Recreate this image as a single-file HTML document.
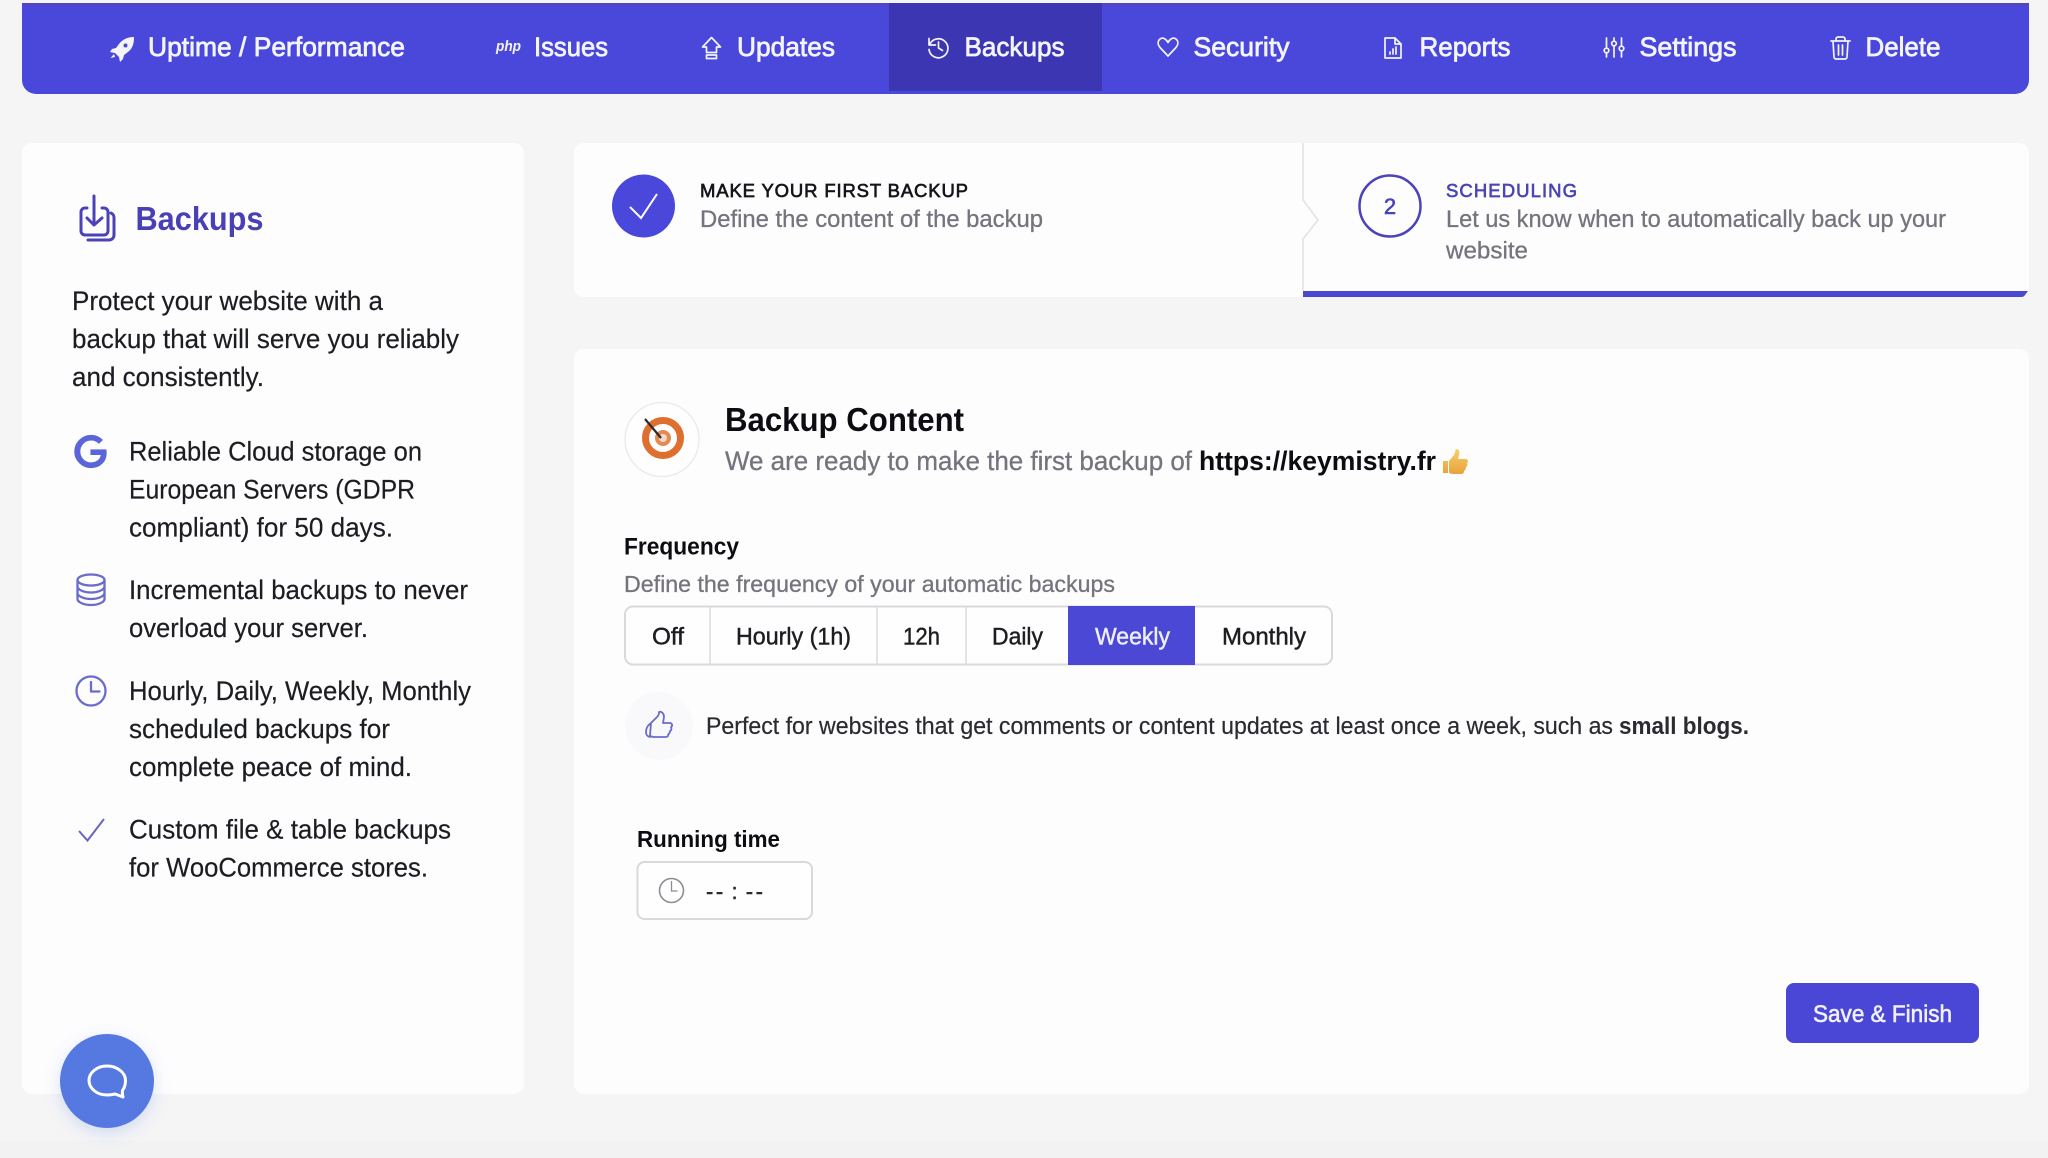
<!DOCTYPE html>
<html lang="en">
<head>
<meta charset="utf-8">
<title>Backups</title>
<style>
html,body{margin:0;padding:0;background:#f5f5f6;width:2048px;height:1158px;overflow:hidden}
svg{display:block;filter:blur(.35px)}
text{font-family:"Liberation Sans",sans-serif;white-space:pre}
.nav{font-size:27px;fill:#f4f4fd;stroke:#f4f4fd;stroke-width:.75}
.body{font-size:26.5px;fill:#1c1d22;stroke:#1c1d22;stroke-width:.2}
.gray{fill:#74747e;stroke:#74747e;stroke-width:.3}
.tab{font-size:24.5px;fill:#1d1d22;stroke:#1d1d22;stroke-width:.45}
.ico{fill:none;stroke:#f4f4fd;stroke-width:1.7;stroke-linecap:round;stroke-linejoin:round}
.pur{fill:none;stroke:#6a6cc9;stroke-width:2.3;stroke-linecap:round;stroke-linejoin:round}
</style>
</head>
<body>
<svg xmlns="http://www.w3.org/2000/svg" width="2048" height="1158" viewBox="0 0 2048 1158">
<defs>
<filter id="sh" x="-30%" y="-30%" width="160%" height="170%"><feDropShadow dx="0" dy="5" stdDeviation="8" flood-color="#5579e0" flood-opacity=".22"/></filter>
<linearGradient id="em" x1="0" y1="0" x2="0" y2="1"><stop offset="0" stop-color="#f7cf6a"/><stop offset="1" stop-color="#e9a23c"/></linearGradient>
</defs>
<rect width="2048" height="1158" fill="#f5f5f6"/>
<rect y="1141" width="2048" height="17" fill="#f2f2f3"/>

<!-- Nav -->
<path d="M22 3H2029V80a14 14 0 0 1-14 14H36a14 14 0 0 1-14-14z" fill="#4a48da"/>
<rect x="22" y="3" width="2007" height="3" fill="#5445c0"/>
<rect x="889" y="3" width="213" height="88" fill="#3d36b3"/>

<text class="nav" x="148" y="56" textLength="257" lengthAdjust="spacingAndGlyphs">Uptime / Performance</text>
<text class="nav" x="534" y="56" textLength="74" lengthAdjust="spacingAndGlyphs">Issues</text>
<text class="nav" x="737" y="56" textLength="98" lengthAdjust="spacingAndGlyphs">Updates</text>
<text class="nav" x="964.500" y="56" textLength="100" lengthAdjust="spacingAndGlyphs">Backups</text>
<text class="nav" x="1193.500" y="56" textLength="96" lengthAdjust="spacingAndGlyphs">Security</text>
<text class="nav" x="1419.500" y="56" textLength="91" lengthAdjust="spacingAndGlyphs">Reports</text>
<text class="nav" x="1639.500" y="56" textLength="97" lengthAdjust="spacingAndGlyphs">Settings</text>
<text class="nav" x="1865.500" y="56" textLength="75" lengthAdjust="spacingAndGlyphs">Delete</text>

<!-- nav icons -->
<path d="M134 37c-6 0-11 2-15 7l-3 4-4 1-2 3 5 1 4 4 1 5 3-3 1-4 4-3c5-4 6-9 6-15z" fill="#f4f4fd"/>
<circle cx="125.500" cy="45.500" r="2" fill="#4a48da"/>
<path d="M114 54l-3.500 4 4.500-1z" fill="#f4f4fd"/>
<text x="496" y="51" font-size="14.500" font-weight="700" font-style="italic" fill="#f4f4fd" textLength="25" lengthAdjust="spacingAndGlyphs">php</text>
<path class="ico" d="M711.500 37.500L720.500 47h-4v5.500h-10V47h-4z"/>
<rect class="ico" x="706.500" y="55" width="10" height="3.500"/>
<path class="ico" d="M929 38.500v6.500h6.500M929.500 45A9.500 9.500 0 1 1 929 49.500M938.500 42v6l4 2.500"/>
<path class="ico" d="M1168 56l-8-8.500c-5-6 1-11.500 5-8.500 1.500 1 2.300 2 3 3.500 .7-1.500 1.500-2.500 3-3.500 4-3 10 2.500 5 8.500z"/>
<path class="ico" d="M1385 38h10l6 6v14h-16zM1395 38v6h6M1390 54v-2M1393 54v-5M1396 54v-7"/>
<path class="ico" d="M1606.500 38v10M1606.500 53v4M1614 38v3M1614 46v11M1621.500 38v8M1621.500 51v6"/>
<circle class="ico" cx="1606.500" cy="50.500" r="2.300"/><circle class="ico" cx="1614" cy="43.500" r="2.300"/><circle class="ico" cx="1621.500" cy="48.500" r="2.300"/>
<path class="ico" d="M1831 41h19M1836 41v-2a2 2 0 0 1 2-2h5a2 2 0 0 1 2 2v2M1833 41l1 16a2 2 0 0 0 2 2h9a2 2 0 0 0 2-2l1-16M1838.500 45v10M1842.500 45v10"/>

<!-- Left card -->
<rect x="22" y="143" width="502" height="951" rx="10" fill="#fdfdfe"/>
<g fill="none" stroke="#4b42b8" stroke-width="3" stroke-linecap="round" stroke-linejoin="round">
<path d="M87 208h-2a4 4 0 0 0-4 4v19a4 4 0 0 0 4 4h19a4 4 0 0 0 4-4v-19a4 4 0 0 0-4-4h-2"/>
<path d="M88 240h21a5 5 0 0 0 5-5v-17a5 5 0 0 0-3-5"/>
<path d="M94 196v29M87 218l7 7 8-7"/>
</g>
<text x="135.500" y="230" font-size="33" font-weight="700" fill="#4840b4" textLength="128" lengthAdjust="spacingAndGlyphs">Backups</text>

<text class="body" x="72" y="310" textLength="311" lengthAdjust="spacingAndGlyphs">Protect your website with a</text>
<text class="body" x="72" y="348" textLength="387" lengthAdjust="spacingAndGlyphs">backup that will serve you reliably</text>
<text class="body" x="72" y="386" textLength="192" lengthAdjust="spacingAndGlyphs">and consistently.</text>

<path transform="translate(74.500 435.500) scale(1.33)" fill="#5b65d9" stroke="#5b65d9" stroke-width="1" d="M12.480 10.920v3.280h7.840c-.24 1.840-.853 3.187-1.787 4.133-1.147 1.147-2.933 2.400-6.053 2.400-4.827 0-8.600-3.893-8.600-8.720s3.773-8.720 8.600-8.720c2.600 0 4.507 1.027 5.907 2.347l2.307-2.307C18.747 1.440 16.133 0 12.480 0 5.867 0 .307 5.387.307 12s5.560 12 12.173 12c3.573 0 6.267-1.173 8.373-3.360 2.160-2.160 2.840-5.213 2.840-7.667 0-.76-.053-1.467-.173-2.053H12.480z"/>
<text class="body" x="129" y="460.500" textLength="293" lengthAdjust="spacingAndGlyphs">Reliable Cloud storage on</text>
<text class="body" x="129" y="498.500" textLength="286" lengthAdjust="spacingAndGlyphs">European Servers (GDPR</text>
<text class="body" x="129" y="536.500" textLength="264" lengthAdjust="spacingAndGlyphs">compliant) for 50 days.</text>

<g class="pur">
<ellipse cx="91" cy="580" rx="13.500" ry="5.500"/>
<path d="M77.500 580v19c0 3 6 6 13.500 6s13.500-3 13.500-6v-19M77.500 586.500c0 3 6 6 13.500 6s13.500-3 13.500-6M77.500 593c0 3 6 6 13.500 6s13.500-3 13.500-6"/>
</g>
<text class="body" x="129" y="599" textLength="339" lengthAdjust="spacingAndGlyphs">Incremental backups to never</text>
<text class="body" x="129" y="637" textLength="239" lengthAdjust="spacingAndGlyphs">overload your server.</text>

<circle class="pur" cx="91" cy="691" r="14.500"/>
<path class="pur" d="M91 682v9.500h8.500"/>
<text class="body" x="129" y="700" textLength="342" lengthAdjust="spacingAndGlyphs">Hourly, Daily, Weekly, Monthly</text>
<text class="body" x="129" y="738" textLength="261" lengthAdjust="spacingAndGlyphs">scheduled backups for</text>
<text class="body" x="129" y="776" textLength="283" lengthAdjust="spacingAndGlyphs">complete peace of mind.</text>

<path d="M79 831l8.500 9.500L104 819" fill="none" stroke="#6a66c0" stroke-width="2"/>
<text class="body" x="129" y="838.500" textLength="322" lengthAdjust="spacingAndGlyphs">Custom file &amp; table backups</text>
<text class="body" x="129" y="876.500" textLength="299" lengthAdjust="spacingAndGlyphs">for WooCommerce stores.</text>

<!-- Stepper -->
<rect x="574" y="143" width="1455" height="154" rx="10" fill="#fdfdfe"/>
<path d="M1303 143v57l15 20-15 19v52" fill="none" stroke="#e2e2e6" stroke-width="1.500"/>
<path d="M1303 291H2028l-3 4a4 4 0 0 1-3 2H1303z" fill="#4a48d0"/>
<circle cx="643.500" cy="206" r="31.500" fill="#4a48da"/>
<path d="M630 207l11 11 16-24" fill="none" stroke="#fff" stroke-width="2"/>
<text x="700" y="197" font-size="18.500" fill="#14141a" stroke="#14141a" stroke-width=".65" textLength="268" lengthAdjust="spacing">MAKE YOUR FIRST BACKUP</text>
<text class="gray" x="700" y="227" font-size="24.500" textLength="343" lengthAdjust="spacingAndGlyphs">Define the content of the backup</text>
<circle cx="1390" cy="206" r="30.500" fill="none" stroke="#4a43bb" stroke-width="2.500"/>
<text x="1390" y="214" font-size="22" text-anchor="middle" fill="#4a43bb" stroke="#4a43bb" stroke-width=".6">2</text>
<text x="1446" y="197" font-size="18.500" fill="#4a45b5" stroke="#4a45b5" stroke-width=".65" textLength="131" lengthAdjust="spacing">SCHEDULING</text>
<text class="gray" x="1446" y="227" font-size="24.500" textLength="500" lengthAdjust="spacingAndGlyphs">Let us know when to automatically back up your</text>
<text class="gray" x="1446" y="258.500" font-size="24.500" textLength="82" lengthAdjust="spacingAndGlyphs">website</text>

<!-- Main card -->
<rect x="574" y="349" width="1455" height="745" rx="10" fill="#fdfdfe"/>
<circle cx="662" cy="439.500" r="37" fill="#fefefe" stroke="#ececee" stroke-width="1.500"/>
<circle cx="663" cy="438" r="17.500" fill="#fff" stroke="#df6f2e" stroke-width="7"/>
<circle cx="663" cy="438" r="6" fill="#f4d9c6" stroke="#e58a52" stroke-width="4"/>
<path d="M645 419l16 19" stroke="#2a2a30" stroke-width="2.200"/>
<text x="725" y="431" font-size="33" font-weight="700" fill="#0c0c12" textLength="239" lengthAdjust="spacingAndGlyphs">Backup Content</text>
<text class="gray" x="725" y="470" font-size="26.500" textLength="467" lengthAdjust="spacingAndGlyphs">We are ready to make the first backup of</text>
<text x="1199" y="470" font-size="26.500" font-weight="700" fill="#0c0c12" textLength="237" lengthAdjust="spacingAndGlyphs">https://keymistry.fr</text>
<path d="M1443 461h5v12h-5zM1449 461l5-6c1-2 1-4 2-6 3 0 4 3 3 6l-1 4h8c2 0 3 3 1 4 1 2 0 4-1 4 0 2-1 3-2 4 0 2-1 3-3 3h-8c-2 0-3-1-4-1z" fill="url(#em)"/>

<text x="624" y="554.500" font-size="24" font-weight="700" fill="#0c0c12" textLength="115" lengthAdjust="spacingAndGlyphs">Frequency</text>
<text class="gray" x="624" y="592" font-size="23.500" textLength="491" lengthAdjust="spacingAndGlyphs">Define the frequency of your automatic backups</text>

<rect x="625" y="606.500" width="707" height="58" rx="8" fill="#fefefe" stroke="#d9d9dd" stroke-width="2"/>
<path d="M710 606v59M877 606v59M966 606v59" stroke="#dcdce0" stroke-width="1.500"/>
<rect x="1068" y="606" width="127" height="59" fill="#4a48d4"/>
<text class="tab" x="652" y="644.500" textLength="32" lengthAdjust="spacingAndGlyphs">Off</text>
<text class="tab" x="736" y="644.500" textLength="115" lengthAdjust="spacingAndGlyphs">Hourly (1h)</text>
<text class="tab" x="903" y="644.500" textLength="37" lengthAdjust="spacingAndGlyphs">12h</text>
<text class="tab" x="992" y="644.500" textLength="51" lengthAdjust="spacingAndGlyphs">Daily</text>
<text class="tab" x="1095" y="644.500" textLength="75" lengthAdjust="spacingAndGlyphs" style="fill:#eeeefc;stroke:#eeeefc">Weekly</text>
<text class="tab" x="1222" y="644.500" textLength="84" lengthAdjust="spacingAndGlyphs">Monthly</text>

<circle cx="659" cy="726" r="34" fill="#f9f9fb"/>
<path d="M651 723l6-6c2-2 2-3 2-5 3-1 5 2 5 5l-1 6h7c2 0 3 3 1 4 1 2 0 4-1 4 0 2-1 3-2 4 0 2-1 2-3 2h-11c-2 0-3-1-4-1zM651 723c-3 2-5 5-5 9 0 3 2 5 5 5" fill="none" stroke="#6a6cc9" stroke-width="1.800" stroke-linejoin="round"/>
<text x="706" y="734" font-size="24" fill="#2a2a31" stroke="#2a2a31" stroke-width=".2" textLength="907" lengthAdjust="spacingAndGlyphs">Perfect for websites that get comments or content updates at least once a week, such as</text>
<text x="1619" y="734" font-size="24" font-weight="700" fill="#2a2a31" textLength="130" lengthAdjust="spacingAndGlyphs">small blogs.</text>

<text x="637" y="847" font-size="23.500" font-weight="700" fill="#0c0c12" textLength="143" lengthAdjust="spacingAndGlyphs">Running time</text>
<rect x="637.500" y="862" width="174.500" height="57" rx="7" fill="#fefefe" stroke="#d9d9dd" stroke-width="2"/>
<circle cx="671.500" cy="890.500" r="12" fill="none" stroke="#8d8d93" stroke-width="1.600"/>
<path d="M671.500 881v10h6" fill="none" stroke="#8d8d93" stroke-width="1.300"/>
<text x="706" y="899" font-size="22" fill="#2a2a31" stroke="#2a2a31" stroke-width=".45" word-spacing="-3" textLength="57" lengthAdjust="spacing">-- : --</text>

<rect x="1786" y="983" width="193" height="60" rx="8" fill="#4a46d6"/>
<text x="1813" y="1022" font-size="24" fill="#f1f1fd" stroke="#f1f1fd" stroke-width=".6" textLength="139" lengthAdjust="spacingAndGlyphs">Save &amp; Finish</text>

<!-- Chat -->
<circle cx="107" cy="1081" r="47" fill="#5579e0" filter="url(#sh)"/>
<path d="M107 1066c-10 0-18 6.500-18 14.500s8 14.500 18 14.500c3 0 6-.5 8-1l8 3c-.5-2-1-4-.5-6.500 2-2.500 3-6 3-10 0-8-8.500-14.500-18.500-14.500z" fill="none" stroke="#fff" stroke-width="3" stroke-linejoin="round"/>
</svg>
</body>
</html>
